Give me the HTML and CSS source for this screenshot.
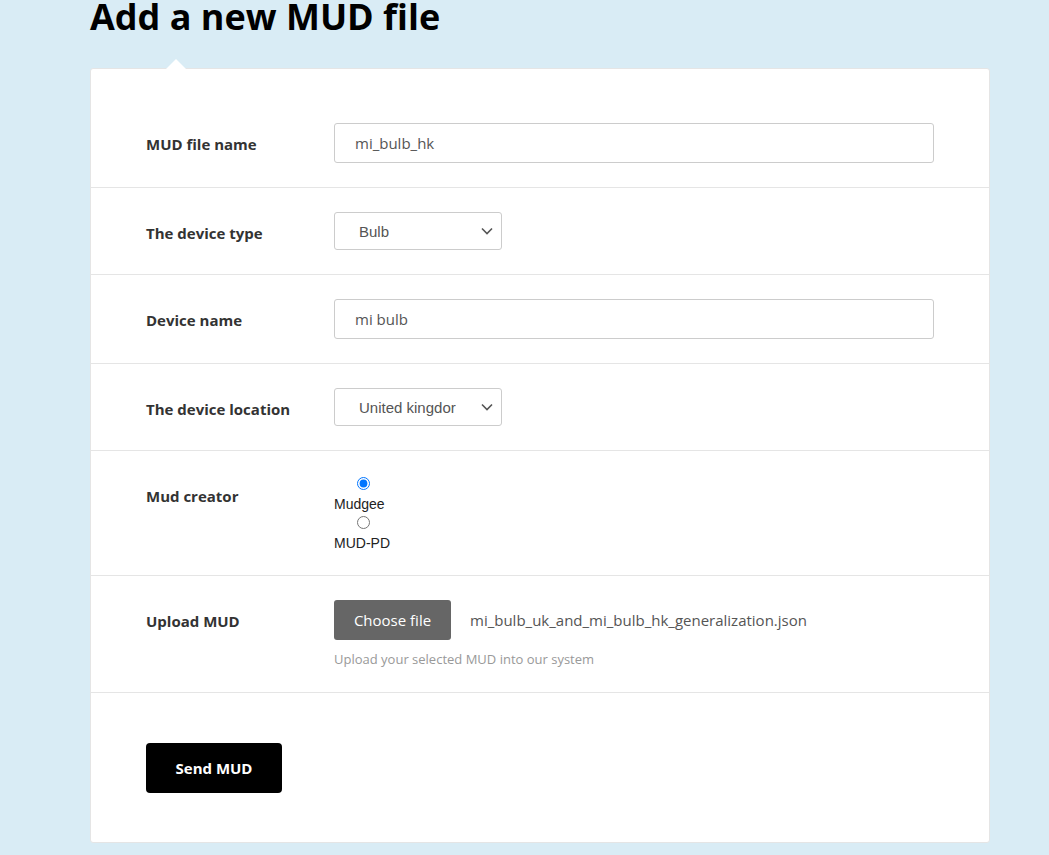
FILE: index.html
```html
<!DOCTYPE html>
<html>
<head>
<meta charset="utf-8">
<link rel="stylesheet" href="styles.css">
</head>
<body>
<div class="page">
  <h1 class="title">Add a new MUD file</h1>
  <form class="card">
    <div class="row row-first">
      <div class="label">MUD file name</div>
      <div class="field"><input class="text-input" type="text" value="mi_bulb_hk"></div>
    </div>
    <div class="row">
      <div class="label">The device type</div>
      <div class="field">
        <div class="select"><span class="select-text">Bulb</span>
          <svg class="chev" width="12" height="8" viewBox="0 0 12 8"><path d="M1 1.5 L6 6.5 L11 1.5" fill="none" stroke="#555" stroke-width="1.6"/></svg>
        </div>
      </div>
    </div>
    <div class="row">
      <div class="label">Device name</div>
      <div class="field"><input class="text-input" type="text" value="mi bulb"></div>
    </div>
    <div class="row">
      <div class="label">The device location</div>
      <div class="field">
        <div class="select"><span class="select-text">United kingdor</span>
          <svg class="chev" width="12" height="8" viewBox="0 0 12 8"><path d="M1 1.5 L6 6.5 L11 1.5" fill="none" stroke="#555" stroke-width="1.6"/></svg>
        </div>
      </div>
    </div>
    <div class="row">
      <div class="label">Mud creator</div>
      <div class="field radios">
        <input class="radio" type="radio" name="creator" id="r1" checked>
        <label class="radio-label" for="r1">Mudgee</label>
        <input class="radio" type="radio" name="creator" id="r2">
        <label class="radio-label radio-label-last" for="r2">MUD-PD</label>
      </div>
    </div>
    <div class="row">
      <div class="label">Upload MUD</div>
      <div class="field">
        <div class="file-line">
          <span class="file-btn">Choose file</span>
          <span class="file-name">mi_bulb_uk_and_mi_bulb_hk_generalization.json</span>
        </div>
        <div class="help">Upload your selected MUD into our system</div>
      </div>
    </div>
    <div class="row row-last">
      <button class="send" type="button">Send MUD</button>
    </div>
  </form>
</div>
</body>
</html>
```

FILE: styles.css
```css
html, body {
  margin: 0;
  padding: 0;
  background: #d9ecf5;
}
body {
  font-family: "Open Sans", "Liberation Sans", sans-serif;
  color: #333;
  height: 855px;
  overflow: hidden;
}
.page {
  padding-left: 90px;
  width: 900px;
}
.title {
  margin: 0 0 34px 0;
  font-size: 36px;
  line-height: 34px;
  font-weight: 700;
  color: #000;
}
.card {
  position: relative;
  display: block;
  background: #fff;
  border: 1px solid #e5e5e5;
  border-radius: 3px;
  width: 898px;
  margin: 0;
}
.card::before {
  content: "";
  position: absolute;
  left: 75px;
  top: -10px;
  width: 0;
  height: 0;
  border-left: 10px solid transparent;
  border-right: 10px solid transparent;
  border-bottom: 10px solid #fff;
}
.row {
  display: flex;
  align-items: flex-start;
  padding: 24px 55px;
  border-bottom: 1px solid #e5e5e5;
}
.row-first {
  padding-top: 54px;
}
.row-last {
  border-bottom: none;
  padding-top: 50px;
  padding-bottom: 49px;
}
.label {
  width: 188px;
  flex: none;
  padding-top: 10px;
  line-height: 22px;
  font-size: 15px;
  font-weight: 700;
  color: #333;
}
.field {
  flex: 1;
}
.text-input {
  box-sizing: border-box;
  width: 600px;
  height: 40px;
  border: 1px solid #ccc;
  border-radius: 3px;
  padding: 0 20px;
  font-family: "Open Sans", sans-serif;
  font-size: 15px;
  color: #555;
  outline: none;
  margin: 0;
  display: block;
}
.select {
  box-sizing: border-box;
  width: 168px;
  height: 38px;
  border: 1px solid #ccc;
  border-radius: 3px;
  display: flex;
  align-items: center;
  justify-content: space-between;
  padding: 0 8px 0 24px;
  font-family: "Liberation Sans", Arial, sans-serif;
  font-size: 15px;
  color: #555;
}
.select-text {
  white-space: nowrap;
  overflow: hidden;
}
.chev {
  flex: none;
}
.radios {
  display: flex;
  flex-direction: column;
  align-items: flex-start;
}
.radio {
  display: block;
  width: 13px;
  height: 13px;
  margin: 2px 0 6px 23px;
}
.radio-label {
  font-family: "Liberation Sans", Arial, sans-serif;
  font-size: 14px;
  line-height: 16px;
  color: #222;
  margin-bottom: 2px;
}
.radio-label-last {
  margin-bottom: 0;
}
.file-line {
  display: flex;
  align-items: center;
}
.file-btn {
  display: inline-flex;
  align-items: center;
  justify-content: center;
  width: 117px;
  height: 40px;
  background: #666;
  color: #fff;
  border-radius: 3px;
  font-size: 15px;
}
.file-name {
  margin-left: 19px;
  font-size: 15px;
  color: #555;
}
.help {
  margin-top: 10px;
  font-size: 13px;
  line-height: 18px;
  color: #999;
}
.send {
  width: 136px;
  height: 50px;
  background: #000;
  color: #fff;
  border: none;
  border-radius: 4px;
  font-family: "Open Sans", sans-serif;
  font-weight: 700;
  font-size: 15px;
  padding: 0;
}
```
